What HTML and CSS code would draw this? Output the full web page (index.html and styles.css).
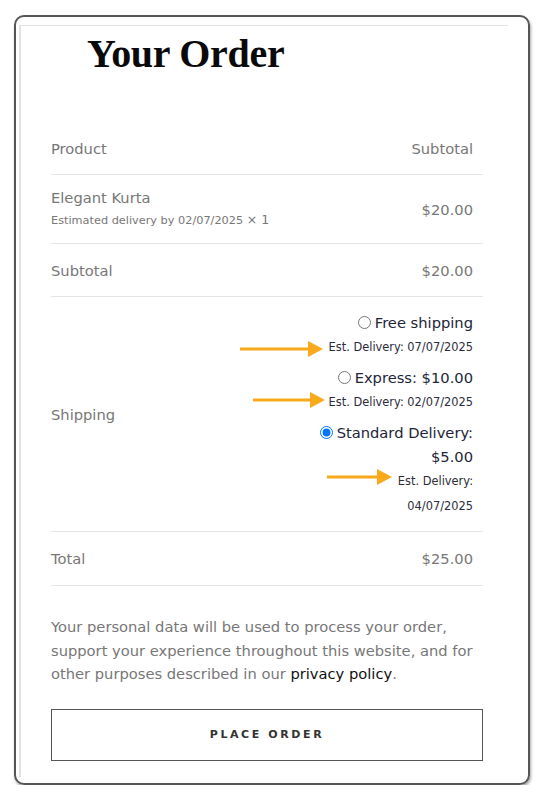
FILE: index.html
```html
<!DOCTYPE html>
<html>
<head>
<meta charset="utf-8">
<link rel="stylesheet" href="styles.css">
</head>
<body>
<div class="frame">
  <div class="inner">
    <h1 class="title">Your Order</h1>
    <div class="table">
      <div class="row head">
        <span>Product</span>
        <span>Subtotal</span>
      </div>
      <div class="row product">
        <div class="prod">
          <div class="prod-name">Elegant Kurta</div>
          <div class="prod-meta">Estimated delivery by 02/07/2025 <span class="qty">× 1</span></div>
        </div>
        <span>$20.00</span>
      </div>
      <div class="row">
        <span>Subtotal</span>
        <span>$20.00</span>
      </div>
      <div class="row shipping">
        <span>Shipping</span>
        <div class="options">
          <div class="opt">
            <label class="opt-label"><input type="radio" name="ship">Free shipping</label>
            <div class="opt-est">Est. Delivery: 07/07/2025</div>
          </div>
          <div class="opt">
            <label class="opt-label"><input type="radio" name="ship">Express: $10.00</label>
            <div class="opt-est">Est. Delivery: 02/07/2025</div>
          </div>
          <div class="opt">
            <label class="opt-label"><input type="radio" name="ship" checked>Standard Delivery:<br>$5.00</label>
            <div class="opt-est">Est. Delivery:<br>04/07/2025</div>
          </div>
        </div>
        <svg class="arrows" width="432" height="234" viewBox="0 0 432 234">
          <g fill="#f9a91c" stroke="#f9a91c">
            <line x1="189" y1="52" x2="259" y2="52" stroke-width="3"/>
            <polygon points="257,44 272,52 257,60" stroke="none"/>
            <line x1="202" y1="103" x2="261" y2="103" stroke-width="3"/>
            <polygon points="259,95 274,103 259,111" stroke="none"/>
            <line x1="276" y1="180" x2="328" y2="180" stroke-width="3"/>
            <polygon points="326,172 341,180 326,188" stroke="none"/>
          </g>
        </svg>
      </div>
      <div class="row total">
        <span>Total</span>
        <span>$25.00</span>
      </div>
    </div>
    <p class="privacy">Your personal data will be used to process your order, support your experience throughout this website, and for other purposes described in our <a class="link">privacy policy</a>.</p>
    <button class="place">PLACE ORDER</button>
  </div>
</div>
</body>
</html>
```
FILE: styles.css
```css
html, body {
  margin: 0;
  padding: 0;
  background: #fff;
}
body {
  font-family: "DejaVu Sans", sans-serif;
  color: #777;
}
.frame {
  margin: 15px 0 0 14px;
  width: 512px;
  height: 766px;
  border: 2px solid #555;
  border-radius: 10px;
  box-shadow: 1px 2px 3px rgba(0,0,0,0.35);
  overflow: hidden;
}
.inner {
  margin: 8px 0 0 3px;
  width: 489px;
  height: 752px;
  border-left: 2px solid #e2e2e2;
  border-top: 1px solid #e2e2e2;
  padding: 0 0 0 30px;
  box-sizing: border-box;
}
.title {
  margin: 4px 0 0 36px;
  font-family: "Liberation Serif", serif;
  font-weight: bold;
  font-size: 40px;
  line-height: 48px;
  color: #0a0a0a;
  letter-spacing: -0.3px;
}
.table {
  margin-top: 44px;
  width: 432px;
}
.row {
  display: flex;
  justify-content: space-between;
  align-items: center;
  height: 52px;
  padding-right: 10px;
  border-bottom: 1px solid #e4e4e4;
  font-size: 14.7px;
  color: #777;
}
.row.product {
  height: 68px;
}
.prod-name {
  line-height: 22px;
}
.prod-meta {
  font-size: 11.3px;
  line-height: 22px;
  color: #777;
}
.qty {
  font-size: 12.5px;
}
.row.shipping {
  position: relative;
  height: 234px;
}
.options {
  align-self: flex-start;
  padding-top: 14px;
  text-align: right;
}
.opt {
  margin-bottom: 6px;
}
.opt-label {
  display: block;
  font-size: 14.7px;
  line-height: 24px;
  font-weight: 500;
  color: #22253a;
}
.opt-label input {
  margin: 0 4px 0 0;
  width: 13px;
  height: 13px;
  vertical-align: -1px;
}
.opt-est {
  font-size: 11.4px;
  line-height: 25px;
  color: #2a2c3a;
}
.arrows {
  position: absolute;
  left: 0;
  top: 0;
}
.row.total {
  height: 53px;
}
.privacy {
  margin: 29px 0 0 0;
  width: 432px;
  font-size: 14.7px;
  line-height: 23.5px;
  color: #777;
}
.link {
  color: #111;
  font-weight: 500;
}
.place {
  display: block;
  margin-top: 23px;
  width: 432px;
  height: 52px;
  border: 1px solid #555;
  background: #fff;
  font-family: "DejaVu Sans", sans-serif;
  font-size: 11px;
  font-weight: bold;
  letter-spacing: 2.6px;
  color: #333;
}
```
